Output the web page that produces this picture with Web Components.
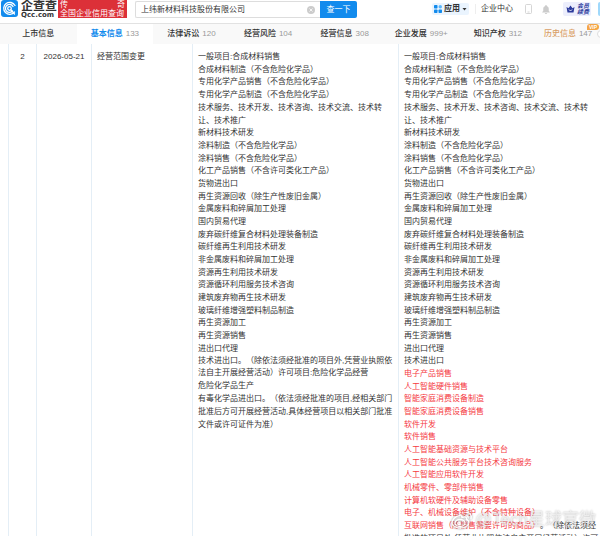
<!DOCTYPE html>
<html lang="zh-CN">
<head>
<meta charset="utf-8">
<title>企查查 - 上纬新材料科技股份有限公司</title>
<style>
  :root {
    --blue: #128bed;
    --red: #f5393f;
    --text: #333;
    --muted: #999;
    --line: #e4eef6;
  }
  body {
    margin: 0;
    background: #fff;
    color: var(--text);
    font: 8px/12px "Liberation Sans", "Noto Sans CJK SC", sans-serif;
    text-spacing-trim: space-all;
    overflow-x: hidden;
  }
</style>
</head>
<body>
<qcc-header></qcc-header>
<qcc-tabs></qcc-tabs>
<change-table></change-table>
<water-mark>@Tech星球官微</water-mark>

<script>
class QccLogo extends HTMLElement {
  constructor() {
    super();
    this.attachShadow({ mode: 'open' });
    this.shadowRoot.innerHTML = `
      <style>
        :host { display: block; }
        a {
          display: flex;
          gap: 3px;
          color: #333;
          text-decoration: none;
        }
        svg { display: block; width: 17px; height: 17px; }
        .words { display: grid; padding-top: 1px; }
        .name { font-size: 12px; line-height: 11px; font-weight: 700; }
        .domain { font: 700 7px/6px "DejaVu Sans", sans-serif; }
      </style>
      <a href="#">
        <svg viewBox="0 0 34 34" aria-hidden="true">
          <rect width="34" height="34" rx="6" fill="#128bed"/>
          <g fill="none" stroke="#fff" stroke-width="2.6" stroke-linecap="round">
            <path d="M27 24a12 12 0 1 1 1-13"/>
            <path d="M23 22a8 8 0 1 1 1-9"/>
            <circle cx="17" cy="17" r="3.6"/>
            <path d="M20 20l7 8"/>
          </g>
        </svg>
        <span class="words">
          <span class="name">企查查</span>
          <span class="domain">Qcc.com</span>
        </span>
      </a>
    `;
  }
}

customElements.define('qcc-logo', QccLogo);

class SearchBox extends HTMLElement {
  constructor() {
    super();
    this.attachShadow({ mode: 'open' });
    this.shadowRoot.innerHTML = `
      <style>
        :host { display: block; }
        form { display: flex; height: 17px; margin: 0; }
        .field {
          display: flex;
          flex: 1;
          align-items: center;
          box-sizing: border-box;
          border: 1px solid #ddd;
          border-right: 0;
          border-radius: 2px 0 0 2px;
          padding: 0 5px;
        }
        input {
          flex: 1;
          min-width: 0;
          border: 0;
          padding: 0;
          outline: 0;
          background: none;
          color: #333;
          font: inherit;
        }
        button { border: 0; padding: 0; font: inherit; }
        .clear { display: block; height: 8px; background: none; }
        .clear svg { display: block; width: 8px; height: 8px; }
        .submit {
          width: 37px;
          background: var(--blue);
          color: #fff;
          border-radius: 0 2px 2px 0;
        }
      </style>
      <form>
        <div class="field">
          <input type="text" aria-label="搜索" value="${this.getAttribute('value') ?? ''}">
          <button class="clear" type="button" aria-label="清除">
            <svg viewBox="0 0 16 16">
              <circle cx="8" cy="8" r="8" fill="#ccc"/>
              <path d="M5 5l6 6M11 5l-6 6" stroke="#fff" stroke-width="1.6"/>
            </svg>
          </button>
        </div>
        <button class="submit" type="button">查一下</button>
      </form>
    `;
  }
}

customElements.define('search-box', SearchBox);

class QccHeader extends HTMLElement {
  constructor() {
    super();
    this.attachShadow({ mode: 'open' });
    this.shadowRoot.innerHTML = `
      <style>
        :host {
          display: flex;
          align-items: flex-start;
          height: 23px;
          padding-left: 1px;
          border-bottom: 1px solid #e2e2e2;
          overflow: hidden;
        }
        .banner {
          box-sizing: border-box;
          width: 69px;
          height: 18px;
          margin-left: 1px;
          padding: 0 2px;
          background: #dc3038;
          color: #fff;
          line-height: 9px;
          white-space: nowrap;
        }
        .banner div { display: flex; justify-content: space-between; }
        search-box { width: 222px; margin: 1px 0 0 8px; }
        nav {
          display: flex;
          align-items: center;
          height: 18px;
          margin-left: auto;
        }
        a { color: #333; text-decoration: none; }
        svg { display: block; }
        .apps {
          display: flex;
          align-items: center;
          gap: 2px;
          padding: 0 2px;
          border-radius: 2px;
          background: #eaf4fe;
          font-weight: 700;
        }
        .center {
          margin-left: 6px;
          padding: 0 12px 0 5px;
          border-left: 1px solid #eee;
          line-height: 10px;
        }
        .bell { margin: 0 13px 0 10px; }
        .member {
          display: flex;
          align-items: center;
          gap: 2px;
          height: 14px;
          padding: 0 2px 0 3px;
          border-radius: 2px;
          background: #eceefc;
          color: #2b3a9c;
          font: italic 700 6px/6px "Liberation Sans", "Noto Sans CJK SC", sans-serif;
        }
        .avatar {
          width: 2px;
          height: 14px;
          margin-left: 7px;
          border-radius: 7px 0 0 7px;
          background: #9fd8fb;
        }
      </style>
      <qcc-logo></qcc-logo>
      <div class="banner">
        <div><span>传</span><span>奇</span></div>
        <div>全国企业信用查询</div>
      </div>
      <search-box value="上纬新材料科技股份有限公司"></search-box>
      <nav>
        <a class="apps" href="#">
          <svg width="8" height="8" viewBox="0 0 16 16" aria-hidden="true">
            <g fill="#128bed">
              <rect width="7" height="7" rx="1.5"/>
              <rect y="9" width="7" height="7" rx="1.5"/>
              <rect x="9" y="9" width="7" height="7" rx="1.5"/>
            </g>
            <circle cx="12.5" cy="3.5" r="3.5" fill="#5cb6fa"/>
          </svg>
          应用
          <svg width="5" height="3" viewBox="0 0 10 6" aria-hidden="true"><path d="M1 0h8L5 5z" fill="#333"/></svg>
        </a>
        <a class="center" href="#">企业中心</a>
        <svg width="7" height="10" viewBox="0 0 14 20" fill="none" stroke="#ccc" stroke-width="1.6" aria-hidden="true">
          <rect x="1" y="1" width="12" height="18" rx="2"/>
          <path d="M5 16h4"/>
        </svg>
        <svg class="bell" width="8" height="9" viewBox="0 0 16 18" fill="#ccc" aria-hidden="true">
          <path d="M8 0a1.4 1.4 0 0 1 1.4 1.8C12 2.5 13.5 4.7 13.5 7.5V12l2 2v1H.5v-1l2-2V7.5C2.5 4.7 4 2.5 6.6 1.8A1.4 1.4 0 0 1 8 0zM5.5 16h5a2.5 2 0 0 1-5 0z"/>
        </svg>
        <a class="member" href="#">
          <svg width="9" height="8" viewBox="0 0 18 16" aria-hidden="true">
            <path d="M1 4l4 2.5L9 1l4 5.5L17 4l-2 11H3z" fill="#2b3a9c"/>
            <path d="M6 9l3 3 3-3" fill="none" stroke="#fff" stroke-width="1.8"/>
          </svg>
          <span>会员<br>续费</span>
        </a>
        <span class="avatar"></span>
      </nav>
    `;
  }
}

customElements.define('qcc-header', QccHeader);

class QccTabs extends HTMLElement {
  constructor() {
    super();
    this.attachShadow({ mode: 'open' });
    this.tabs = [
      { name: '上市信息' },
      { name: '基本信息', count: '133', type: 'active' },
      { name: '法律诉讼', count: '120' },
      { name: '经营风险', count: '104' },
      { name: '经营信息', count: '308' },
      { name: '企业发展', count: '999+' },
      { name: '知识产权', count: '312' },
      { name: '历史信息', count: '147', type: 'vip' }
    ];
    this.render();
  }

  renderTab(tab) {
    return `
      <a href="#" class="${tab.type ?? ''}">
        <span class="name">${tab.name}</span>
        ${tab.count ? `<span class="count">${tab.count}</span>` : ''}
        ${tab.type === 'vip' ? '<b>VIP</b>' : ''}
      </a>
    `;
  }

  render() {
    this.shadowRoot.innerHTML = `
      <style>
        :host { display: block; position: relative; overflow: hidden; background: #f9f9f9; }
        nav {
          display: grid;
          grid-template-columns: repeat(7, 6fr) 5fr;
          height: 20px;
        }
        a {
          position: relative;
          display: flex;
          align-items: center;
          justify-content: center;
          gap: 3px;
          color: #333;
          text-decoration: none;
          white-space: nowrap;
        }
        .name { font-weight: 500; }
        .count { color: var(--muted); }
        .active { background: #fff; }
        .active .name { color: var(--blue); font-weight: 700; }
        .vip .name { color: #d9a066; }
        b {
          position: absolute;
          top: 0;
          right: 1px;
          padding: 0 2px;
          border-radius: 3px 3px 3px 0;
          background: #f5a544;
          color: #fff;
          font-size: 5px;
          line-height: 6px;
        }
        .next {
          position: absolute;
          top: 6px;
          right: -5px;
          box-sizing: border-box;
          width: 8px;
          height: 8px;
          border: 1px solid #ddd;
          border-radius: 50%;
          background: #fff;
        }
      </style>
      <nav>${this.tabs.map((tab) => this.renderTab(tab)).join('')}</nav>
      <span class="next"></span>
    `;
  }
}

customElements.define('qcc-tabs', QccTabs);

class ScopeList extends HTMLElement {
  constructor() {
    super();
    this.attachShadow({ mode: 'open' });
    this.shadowRoot.innerHTML = `
      <style>
        :host { display: block; line-height: 13px; }
        ::slotted(p) { margin: 0; }
        ::slotted(p:nth-child(3n)) { line-height: 12px; }
        ::slotted(.added) { color: var(--red); }
      </style>
      <slot></slot>
    `;
  }
}

customElements.define('scope-list', ScopeList);

const sharedScope = [
  '一般项目:合成材料销售',
  '合成材料制造（不含危险化学品）',
  '专用化学产品销售（不含危险化学品）',
  '专用化学产品制造（不含危险化学品）',
  '技术服务、技术开发、技术咨询、技术交流、技术转让、技术推广',
  '新材料技术研发',
  '涂料制造（不含危险化学品）',
  '涂料销售（不含危险化学品）',
  '化工产品销售（不含许可类化工产品）',
  '货物进出口',
  '再生资源回收（除生产性废旧金属）',
  '金属废料和碎屑加工处理',
  '国内贸易代理',
  '废弃碳纤维复合材料处理装备制造',
  '碳纤维再生利用技术研发',
  '非金属废料和碎屑加工处理',
  '资源再生利用技术研发',
  '资源循环利用服务技术咨询',
  '建筑废弃物再生技术研发',
  '玻璃纤维增强塑料制品制造',
  '再生资源加工',
  '再生资源销售',
  '进出口代理'
];

const beforeScope = [
  '技术进出口。（除依法须经批准的项目外,凭营业执照依法自主开展经营活动）许可项目:危险化学品经营',
  '危险化学品生产',
  '有毒化学品进出口。（依法须经批准的项目,经相关部门批准后方可开展经营活动,具体经营项目以相关部门批准文件或许可证件为准）'
];

const addedScope = [
  '电子产品销售',
  '人工智能硬件销售',
  '智能家庭消费设备制造',
  '智能家庭消费设备销售',
  '软件开发',
  '软件销售',
  '人工智能基础资源与技术平台',
  '人工智能公共服务平台技术咨询服务',
  '人工智能应用软件开发',
  '机械零件、零部件销售',
  '计算机软硬件及辅助设备零售',
  '电子、机械设备维护（不含特种设备）'
];

class ChangeTable extends HTMLElement {
  constructor() {
    super();
    this.attachShadow({ mode: 'open' });
    this.render();
  }

  renderLines(lines, className = '') {
    return lines.map((line) => `<p class="${className}">${line}</p>`).join('');
  }

  render() {
    this.shadowRoot.innerHTML = `
      <style>
        :host { display: block; padding-left: 8px; }
        table {
          width: 100%;
          table-layout: fixed;
          border-collapse: separate;
          border-spacing: 0;
          font: inherit;
          line-height: 13px;
        }
        td {
          box-sizing: border-box;
          padding: 6px 0 6px 5px;
          border-left: 1px solid var(--line);
          vertical-align: top;
        }
        .index { width: 28px; padding-left: 0; text-align: center; }
        .date { width: 55px; padding-left: 0; text-align: center; }
        .item { width: 101px; }
        .before { width: 206px; padding-right: 5px; }
        em { color: var(--red); font-style: normal; }
      </style>
      <table>
        <tr>
          <td class="index">2</td>
          <td class="date">2026-05-21</td>
          <td class="item">经营范围变更</td>
          <td class="before">
            <scope-list>${this.renderLines([...sharedScope, ...beforeScope])}</scope-list>
          </td>
          <td>
            <scope-list>
              ${this.renderLines([...sharedScope, '技术进出口'])}
              ${this.renderLines(addedScope, 'added')}
              <p><em>互联网销售（除销售需要许可的商品）</em>。（除依法须经批准的项目外,凭营业执照依法自主开展经营活动）许可</p>
            </scope-list>
          </td>
        </tr>
      </table>
    `;
  }
}

customElements.define('change-table', ChangeTable);

class WaterMark extends HTMLElement {
  constructor() {
    super();
    this.attachShadow({ mode: 'open' });
    this.shadowRoot.innerHTML = `
      <style>
        :host {
          position: fixed;
          right: 4px;
          bottom: 6px;
          display: flex;
          align-items: center;
          gap: 2px;
          color: rgba(255, 255, 255, 0.6);
          font-size: 17px;
          line-height: 20px;
          text-shadow: 0 0 2px rgba(0, 0, 0, 0.3);
          pointer-events: none;
        }
        svg { width: 22px; height: 18px; filter: drop-shadow(0 0 1px rgba(0, 0, 0, 0.5)); }
      </style>
      <svg viewBox="0 0 44 36" fill="none" stroke="#fff" stroke-width="3" stroke-linecap="round" opacity="0.8" aria-hidden="true">
        <path d="M17 9C9 10 2 18 2 24c0 6 8 10 16 10 10 0 18-5 18-11 0-3-2-5-5-6 1-4-1-7-9-4 0-3-1-5-5-4z"/>
        <ellipse cx="18" cy="24" rx="10" ry="7"/>
        <circle cx="16" cy="25" r="2.5" fill="#fff"/>
        <path d="M30 3c7-1 12 5 10 12M30 9c3 0 5 2 4 5"/>
      </svg>
      <slot></slot>
    `;
  }
}

customElements.define('water-mark', WaterMark);
</script>
</body>
</html>
